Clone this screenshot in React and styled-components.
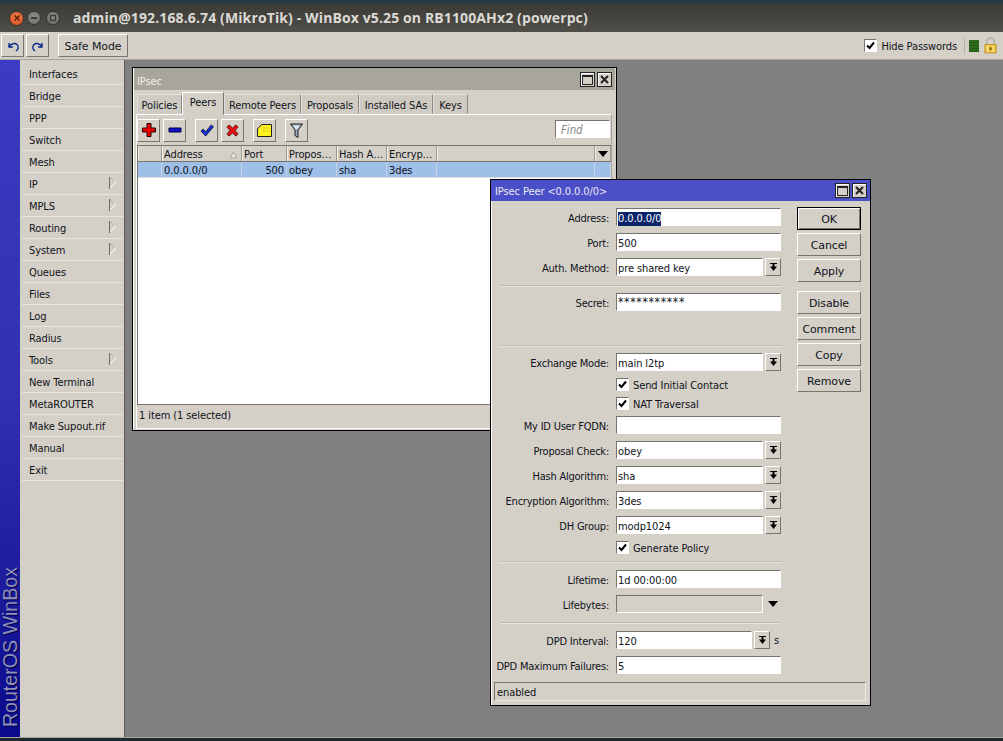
import React from "react";
import styled, { createGlobalStyle } from "styled-components";

const Global = createGlobalStyle`
  html, body { margin: 0; padding: 0; height: 100%; overflow: hidden; background: #2b3a44; }
  #root { height: 741px; }
  * { box-sizing: border-box; }
  button { font-stretch: condensed; letter-spacing: -.1px; }
`;
const base = "#d4d0c8";
const ui = `"DejaVu Sans", "Liberation Sans", sans-serif`;

const Screen = styled.div`
  width: 1003px; height: 741px; display: flex; flex-direction: column;
  font: 11px/14px ${ui}; font-stretch: condensed; letter-spacing: -.1px; color: #10131a; background: ${base};
`;
const TitleBar = styled.div`
  height: 32px; flex: none; display: flex; align-items: center;
  background: linear-gradient(#1f3a4c 0, #2c3a40 3px, #3d3c37 6px, #4f4e48 100%);
  padding: 4px 0 0 9px;
`;
const Dots = styled.div`display: flex; gap: 3px; align-items: center; width: 64px;`;
const Dot = styled.span`
  width: ${p => p.$red ? 15 : 14}px; height: ${p => p.$red ? 15 : 14}px; margin-left: ${p => p.$ml || 0}px; border-radius: 50%; display: flex; align-items: center; justify-content: center;
  background: ${p => p.$red ? "radial-gradient(circle at 50% 35%, #f08050, #d9481c)" : "radial-gradient(circle at 50% 35%, #8d8c84, #6f6e67)"};
  border: 1px solid #35342f;
  svg { display: block; }
`;
const AppTitle = styled.div`
  font: bold 14px/18px "Open Sans", sans-serif; color: #dcdad4; white-space: nowrap; letter-spacing: .12px;
`;
const MainBar = styled.div`
  height: 28px; flex: none; display: flex; align-items: center; padding: 0 0 0 1px;
  border-bottom: 1px solid #a8a59e; background: ${base};
`;
const TbBtn = styled.button`
  height: 23px; width: ${p => p.$w}px; margin-left: ${p => p.$ml || 0}px; padding: 2px 0 0;
  display: flex; align-items: center; justify-content: center; font: 11px/14px ${ui}; color: #10131a;
  background: ${base}; border: 1px solid; border-color: #fff #77746e #77746e #fff;
  outline: none;
`;
const Spacer = styled.div`flex: 1;`;
const HideBox = styled.div`display: flex; align-items: center; gap: 4px; margin-right: 7px;`;
const HideText = styled.span`padding-top: 2px;`;
const Check = styled.span`
  width: 13px; height: 13px; flex: none; background: #fff; display: flex; align-items: center; justify-content: center;
  border: 1px solid; border-color: #77746e #fff #fff #77746e;
`;
const VRule = styled.span`width: 1px; height: 17px; background: #b5b1a9; margin-right: 4px;`;
const Meter = styled.span`
  width: 10px; height: 12px; margin-right: 5px;
  background: repeating-linear-gradient(#2f6a1c 0 2px, #255615 2px 3px);
`;
const Lock = styled.svg`margin-right: 6px; flex: none;`;
const Body = styled.div`flex: 1; min-height: 0; display: flex;`;
const Brand = styled.div`
  width: 20px; flex: none; display: flex; align-items: flex-end; justify-content: center; padding-bottom: 10px;
  background: linear-gradient(#3b3bc4 0, #3030b0 50%, #0a0a8c 100%); overflow: hidden;
`;
const BrandText = styled.span`
  writing-mode: vertical-rl; transform: rotate(180deg); font: 19.6px/20px "Liberation Sans", sans-serif; letter-spacing: 0;
  color: #8f8fb8; white-space: nowrap; text-shadow: -1px 1px 1px #00004a;
`;
const Menu = styled.nav`
  width: 105px; flex: none; padding: 3px 1px 0 2px; background: ${base}; border-right: 1px solid #5a5a58;
`;
const MenuItem = styled.div`
  height: 22px; padding: 2px 0 0 7px; display: flex; align-items: center; justify-content: space-between;
  border-bottom: 1px solid #e8e5de; font-size: 11px;
`;
const ArrowIcon = styled.svg`margin: -4px 7px 0 0; flex: none;`;
const Desk = styled.main`flex: 1; position: relative; background: #808080;`;
const Win = styled.section`
  position: absolute; left: ${p => p.$x}px; top: ${p => p.$y}px; width: ${p => p.$w}px; height: ${p => p.$h}px;
  background: ${base}; border: 1px solid #000; display: flex; flex-direction: column;
  box-shadow: inset 1px 1px 0 #fff;
`;
const WinHead = styled.header`
  height: ${p => p.$active ? 21 : 22}px; flex: none; margin: 0 ${p => p.$active ? 0 : 1}px; padding: 0 3px 0 ${p => p.$active ? 4 : 3}px; display: flex; align-items: center; justify-content: space-between;
  background: ${p => p.$active ? "#4c50c8" : "#a8a59c"}; color: ${p => p.$active ? "#e8e8f0" : "#f0efe9"};
`;
const HeadText = styled.span`margin-top: ${p => p.$active ? 3 : 5}px;`;
const HeadBtns = styled.div`display: flex; gap: 2px;`;
const HeadBtn = styled.span`
  width: 15px; height: 15px; background: ${base}; border: 1px solid #222; display: flex; align-items: center; justify-content: center;
  box-shadow: inset 1px 1px 0 #fff;
`;
const TabBar = styled.div`display: flex; height: 24px; flex: none; padding: 1px 0 0 4px; align-items: flex-end; position: relative; z-index: 1;`;
const Tab = styled.div`
  width: ${p => p.$w}px; height: ${p => p.$on ? 23 : 20}px; padding: ${p => p.$on ? "0 0 2px" : "3px 0 0"}; display: flex; align-items: center; justify-content: center;
  border: 1px solid; border-color: ${p => p.$on ? "#fff #77746e transparent #fff" : "#e4e1da #8c8983 transparent #e4e1da"};
  background: ${p => p.$on ? base : "#cfcbc3"}; margin-bottom: ${p => p.$on ? -1 : 0}px;
`;
const Panel = styled.div`
  flex: 1; min-height: 0; margin: 0 4px 0 3px; border: 1px solid; border-color: #fff #a8a59e transparent #fff;
  display: flex; flex-direction: column; padding: 3px 0 0 0;
`;
const IconRow = styled.div`display: flex; align-items: center; height: 24px; flex: none;`;
const IconBtn = styled.button`
  width: 23px; height: 23px; margin-left: ${p => p.$ml || 0}px; margin-right: 3px; padding: 0; display: flex; align-items: center; justify-content: center;
  background: ${base}; border: 1px solid; border-color: #fff #77746e #77746e #fff;
`;
const Find = styled.div`
  margin: -2px 1px 0 auto; width: 55px; height: 18px; background: #fff; padding-left: 5px;
  font: italic 11.5px/18px ${ui}; font-stretch: condensed; color: #8a8a8a;
  border: 1px solid; border-color: #77746e #fff #fff #77746e;
`;
const Grid = styled.div`
  flex: 1; min-height: 0; background: #fff; margin: 3px 0 0 0; border: 1px solid #77746e; border-right: 0; display: flex; flex-direction: column;
`;
const cols = "24px 80px 45px 50px 50px 50px 1fr 16px";
const GridHead = styled.div`
  display: grid; grid-template-columns: ${cols}; height: 16px; background: ${base}; border-bottom: 1px solid #77746e;
`;
const HCell = styled.div`
  padding: 2px 0 0 1px; border-right: 1px solid #9c9992; border-left: 1px solid #f2f0ea; overflow: hidden; white-space: nowrap; display: flex; align-items: center; justify-content: space-between; line-height: 15px;
`;
const SortIcon = styled.svg`margin-right: 3px; flex: none;`;
const MenuDown = styled(HCell)`justify-content: center; padding: 0;`;
const GridRow = styled.div`
  display: grid; grid-template-columns: ${cols}; height: 16px; background: #9dbfe8; border-bottom: 1px solid #e0e0e0;
`;
const Cell = styled.div`
  padding: 1px 2px 0; text-align: ${p => p.$right ? "right" : "left"}; border-right: 1px solid #c5d3e4; line-height: 15px; white-space: nowrap;
`;
const StatusLine = styled.div`height: 24px; flex: none; padding: 3px 0 0 2px; line-height: 16px; border-bottom: 1px solid #fff;`;
const Form = styled.div`flex: 1; min-height: 0; display: flex; padding: 7px 9px 0 0;`;
const Fields = styled.div`width: 290px; flex: none;`;
const Actions = styled.div`margin: -1px 0 0 16px; width: 64px; display: flex; flex-direction: column;`;
const ActBtn = styled.button`
  width: 64px; height: 23px; padding: 2px 0 0; margin-top: ${p => p.$mt || 0}px; margin-bottom: 3px; font: 11px/14px ${ui}; color: #10131a; background: ${base};
  border: 1px solid; border-color: #fff #77746e #77746e #fff;
  ${p => p.$def && "border-color: #000; box-shadow: inset 1px 1px 0 #fff, inset -1px -1px 0 #77746e;"}
`;
const Row = styled.div`
  display: flex; align-items: center; height: 18px; margin-top: ${p => p.$mt ?? 7}px;
`;
const Label = styled.label`
  width: 125px; flex: none; text-align: right; padding: 3px 7px 0 0; white-space: nowrap; letter-spacing: -.22px;
`;
const Input = styled.div`
  width: ${p => p.$w || 165}px; height: 18px; flex: none; padding: 0 1px; line-height: 19px; white-space: nowrap;
  background: ${p => p.$off ? base : "#fff"};
  border: 1px solid; border-color: #77746e #fff #fff #77746e;
`;
const Stars = styled.span`font-size: 12px; letter-spacing: .7px; line-height: 16px; display: block;`;
const Sel = styled.span`background: #0a246a; color: #fff; display: inline-block; line-height: 14px;`;
const Drop = styled.span`
  width: 16px; height: 18px; flex: none; margin-left: 2px; background: ${base}; display: flex; align-items: center; justify-content: center;
  border: 1px solid; border-color: #fff #77746e #77746e #fff;
`;
const BareDrop = styled.span`margin-left: 5px; width: 0; height: 0; border-top: 6px solid #000; border-left: 5.5px solid transparent; border-right: 5.5px solid transparent;`;
const Unit = styled.span`margin: 2px 0 0 4px;`;
const CheckRow = styled.div`
  display: flex; align-items: center; height: 18px; margin-top: ${p => p.$mt ?? 1}px; padding-left: 125px; gap: 4px;
`;
const CheckText = styled.span`padding-top: 3px;`;
const Sep = styled.hr`
  height: 0; margin: ${p => p.$t}px 0 0 9px; width: 281px; border: 0; border-top: 1px solid #bdb9b1; border-bottom: 1px solid #e6e3dc;
`;
const WinStatus = styled.div`
  height: 19px; margin: 0 4px 4px 3px; padding-left: 2px; line-height: 19px; flex: none;
  border: 1px solid; border-color: #77746e #efece6 #efece6 #77746e;
`;
const BottomEdge = styled.div`height: 4px; flex: none; background: #1e2a30; border-top: 1px solid #a8a59e;`;

const Tick = () => (
  <svg width="9" height="9" viewBox="0 0 9 9"><path d="M1 4.5 3.5 7 8 1.5" fill="none" stroke="#000" strokeWidth="2" /></svg>
);
const DropGlyph = () => (
  <svg width="9" height="9" viewBox="0 0 9 9"><path d="M1 0h7v1H1z M4.5 8 1 3.5h7z M3.5 1h2v3h-2z" fill="#000" /></svg>
);
const WinControls = () => (
  <HeadBtns>
    <HeadBtn><svg width="11" height="11" viewBox="0 0 11 11"><path d="M.5 1.5h10v9H.5z" fill="none" stroke="#222" /><path d="M0 1h11v2H0z" fill="#222" /></svg></HeadBtn>
    <HeadBtn><svg width="9" height="9" viewBox="0 0 9 9"><path d="M1 1l7 7M8 1 1 8" stroke="#222" strokeWidth="2" /></svg></HeadBtn>
  </HeadBtns>
);
const SubArrow = () => (
  <ArrowIcon width="7" height="12" viewBox="0 0 7 12">
    <path d="M.5 .5 6.5 6" fill="none" stroke="#f4f2ec" />
    <path d="M.5 11.5 6.5 6" fill="none" stroke="#fff" />
    <path d="M.5 0v12" fill="none" stroke="#6e6b65" />
    <path d="M.9 .6 5 4.4" fill="none" stroke="#8a8780" strokeWidth=".8" />
  </ArrowIcon>
);

const menu = [["Interfaces"],["Bridge"],["PPP"],["Switch"],["Mesh"],["IP",1],["MPLS",1],["Routing",1],["System",1],["Queues"],["Files"],["Log"],["Radius"],["Tools",1],["New Terminal"],["MetaROUTER"],["Make Supout.rif"],["Manual"],["Exit"]];
const tabs = [["Policies",45],["Peers",42,1],["Remote Peers",77],["Proposals",58],["Installed SAs",74],["Keys",35]];

function Field({ label, value, mt, w, children, off }) {
  return (
    <Row $mt={mt}>
      <Label>{label}</Label>
      <Input $w={w} $off={off}>{value}</Input>
      {children}
    </Row>
  );
}
function CheckField({ label, mt }) {
  return <CheckRow $mt={mt}><Check><Tick /></Check><CheckText>{label}</CheckText></CheckRow>;
}

export default function App() {
  return (
    <Screen>
      <Global />
      <TitleBar>
        <Dots>
          <Dot $red><svg width="8" height="8" viewBox="0 0 8 8"><path d="M1.5 1.5l5 5M6.5 1.5l-5 5" stroke="#5a2008" strokeWidth="1.5" /></svg></Dot>
          <Dot><svg width="8" height="8" viewBox="0 0 8 8"><path d="M1 4h6" stroke="#3c3b36" strokeWidth="2" /></svg></Dot>
          <Dot $ml={2}><svg width="8" height="8" viewBox="0 0 8 8"><path d="M1.5 1.5h5v5h-5z" fill="none" stroke="#3c3b36" strokeWidth="1.4" /></svg></Dot>
        </Dots>
        <AppTitle>admin@192.168.6.74 (MikroTik) - WinBox v5.25 on RB1100AHx2 (powerpc)</AppTitle>
      </TitleBar>
      <MainBar>
        <TbBtn $w={23}>
          <svg width="14" height="12" viewBox="0 0 14 12"><path d="M3 2v4h4M3.4 5.5C5 2.5 9 1.7 11 3.6c2 2 1.4 5-1.2 6.4" fill="none" stroke="#0a2a8c" strokeWidth="1.4" /></svg>
        </TbBtn>
        <TbBtn $w={23} $ml={2}>
          <svg width="14" height="12" viewBox="0 0 14 12"><path d="M11 2v4H7M10.6 5.5C9 2.5 5 1.7 3 3.6c-2 2-1.4 5 1.2 6.4" fill="none" stroke="#0a2a8c" strokeWidth="1.4" /></svg>
        </TbBtn>
        <TbBtn $w={70} $ml={9}>Safe Mode</TbBtn>
        <Spacer />
        <HideBox><Check><Tick /></Check><HideText>Hide Passwords</HideText></HideBox>
        <VRule />
        <Meter />
        <Lock width="13" height="17" viewBox="0 0 14 18">
          <path d="M3 8V5a4 4 0 0 1 8 0v3" fill="none" stroke="#b8b4a8" strokeWidth="2" />
          <rect x="1" y="8" width="12" height="9" fill="#f6c33e" stroke="#b8942e" />
          <path d="M4 9v7M10 9v7" stroke="#fde79a" strokeWidth="1.5" />
          <rect x="6" y="11" width="2" height="3" fill="#6a5010" />
        </Lock>
      </MainBar>
      <Body>
        <Brand><BrandText>RouterOS WinBox</BrandText></Brand>
        <Menu>
          {menu.map(([t, sub]) => <MenuItem key={t}><span>{t}</span>{sub && <SubArrow />}</MenuItem>)}
        </Menu>
        <Desk>
          <Win $x={7} $y={7} $w={485} $h={364}>
            <WinHead><HeadText>IPsec</HeadText><WinControls /></WinHead>
            <TabBar>
              {tabs.map(([t, w, on]) => <Tab key={t} $w={w} $on={on}>{t}</Tab>)}
            </TabBar>
            <Panel>
              <IconRow>
                <IconBtn><svg width="14" height="14" viewBox="0 0 14 14"><path d="M5 .5h4v4.500h4.500v4H9v4.500H5V9H.5V5H5z" fill="#e80000" stroke="#200" strokeWidth="1" /></svg></IconBtn>
                <IconBtn><svg width="14" height="6" viewBox="0 0 14 6"><path d="M1 1h12v4H1z" fill="#1010d8" stroke="#003" strokeWidth="1" /></svg></IconBtn>
                <IconBtn $ml={6}><svg width="14" height="13" viewBox="0 0 15 14"><path d="M1 7.500 3.500 5.500l2.500 3 6-7.500 2.500 2L6 13z" fill="#1a2fd8" stroke="#002" strokeWidth=".8" /></svg></IconBtn>
                <IconBtn><svg width="13" height="13" viewBox="0 0 15 15"><path d="M1 3.500 3.500 1l4 3.500 4-3.500L14 3.500 10.500 7.500 14 11.500 11.500 14l-4-3.500-4 3.500L1 11.500 4.500 7.500z" fill="#e81010" stroke="#300" strokeWidth=".8" /></svg></IconBtn>
                <IconBtn $ml={6}><svg width="15" height="13" viewBox="0 0 15 13"><path d="M.5 5 4.500.5h10v12H.5z" fill="#fff21c" stroke="#222" strokeWidth="1" /><path d="M6 4h7M6 7h7" stroke="#c8c020" strokeDasharray="2 1" /></svg></IconBtn>
                <IconBtn $ml={6}><svg width="13" height="15" viewBox="0 0 13 15"><path d="M.5 1h12L8 7v7.500L5 12.500V7z" fill="#9ba8bc" stroke="#222" strokeWidth="1" /><path d="M3 2.500h7L7.500 6h-2z" fill="#dfe6ee" /></svg></IconBtn>
                <Find>Find</Find>
              </IconRow>
              <Grid>
                <GridHead>
                  <HCell />
                  <HCell>Address<SortIcon width="9" height="8" viewBox="0 0 9 8"><path d="M4.500 1 8 7H1z" fill="#e6e3dc" stroke="#a8a59e" /></SortIcon></HCell>
                  <HCell>Port</HCell>
                  <HCell>Propos…</HCell>
                  <HCell>Hash A…</HCell>
                  <HCell>Encryp…</HCell>
                  <HCell />
                  <MenuDown><svg width="10" height="6" viewBox="0 0 10 6"><path d="M0 0h10L5 6z" fill="#000" /></svg></MenuDown>
                </GridHead>
                <GridRow>
                  <Cell /><Cell>0.0.0.0/0</Cell><Cell $right>500</Cell><Cell>obey</Cell><Cell>sha</Cell><Cell>3des</Cell><Cell /><Cell />
                </GridRow>
              </Grid>
              <StatusLine>1 item (1 selected)</StatusLine>
            </Panel>
          </Win>
          <Win $x={365} $y={119} $w={381} $h={527}>
            <WinHead $active><HeadText $active>IPsec Peer &lt;0.0.0.0/0&gt;</HeadText><WinControls /></WinHead>
            <Form>
              <Fields>
                <Row $mt={0}><Label>Address:</Label><Input><Sel>0.0.0.0/0</Sel></Input></Row>
                <Field label="Port:" value="500" />
                <Field label="Auth. Method:" value="pre shared key" w={147}><Drop><DropGlyph /></Drop></Field>
                <Sep $t={9} />
                <Field label="Secret:" value={<Stars>***********</Stars>} mt={6} />
                <Sep $t={34} />
                <Field label="Exchange Mode:" value="main l2tp" w={147} mt={6}><Drop><DropGlyph /></Drop></Field>
                <CheckField label="Send Initial Contact" mt={4} />
                <CheckField label="NAT Traversal" />
                <Field label="My ID User FQDN:" mt={4} />
                <Field label="Proposal Check:" value="obey" w={147}><Drop><DropGlyph /></Drop></Field>
                <Field label="Hash Algorithm:" value="sha" w={147}><Drop><DropGlyph /></Drop></Field>
                <Field label="Encryption Algorithm:" value="3des" w={147}><Drop><DropGlyph /></Drop></Field>
                <Field label="DH Group:" value="modp1024" w={147}><Drop><DropGlyph /></Drop></Field>
                <CheckField label="Generate Policy" mt={4} />
                <Sep $t={5} />
                <Field label="Lifetime:" value="1d 00:00:00" mt={7} />
                <Field label="Lifebytes:" off w={147}><BareDrop /></Field>
                <Sep $t={9} />
                <Field label="DPD Interval:" value="120" w={136} mt={7}><Drop><DropGlyph /></Drop><Unit>s</Unit></Field>
                <Field label="DPD Maximum Failures:" value="5" />
              </Fields>
              <Actions>
                <ActBtn $def>OK</ActBtn>
                <ActBtn>Cancel</ActBtn>
                <ActBtn>Apply</ActBtn>
                <ActBtn $mt={6}>Disable</ActBtn>
                <ActBtn>Comment</ActBtn>
                <ActBtn>Copy</ActBtn>
                <ActBtn>Remove</ActBtn>
              </Actions>
            </Form>
            <WinStatus>enabled</WinStatus>
          </Win>
        </Desk>
      </Body>
      <BottomEdge />
    </Screen>
  );
}
